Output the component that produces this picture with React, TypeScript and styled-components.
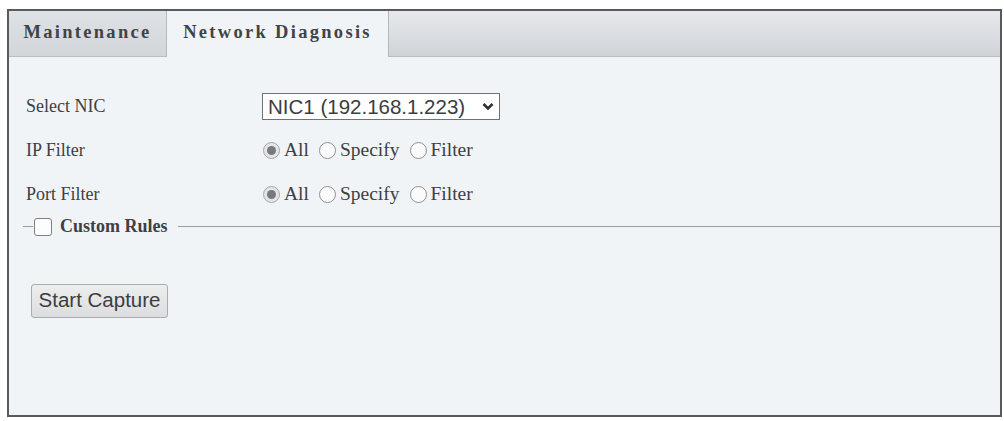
import React from 'react';
import styled, { createGlobalStyle } from 'styled-components';

const GlobalStyle = createGlobalStyle`
  html, body {
    margin: 0;
    padding: 0;
    background: #ffffff;
  }
`;

const Panel = styled.div`
  margin: 9px 2px 0 7px;
  height: 408px;
  border: 2px solid #575a5e;
  background: #f1f4f7;
  display: flex;
  flex-direction: column;
  box-sizing: border-box;
`;

const TabBar = styled.div`
  display: flex;
  height: 45px;
  background: linear-gradient(to bottom, #e6e8eb 0%, #d9dce0 60%, #cfd3d7 100%);
  border-bottom: 1px solid #b9bdc2;
`;

const Tab = styled.div<{ $active?: boolean; $width: number }>`
  display: flex;
  align-items: center;
  justify-content: center;
  height: ${p => (p.$active ? '46px' : '45px')};
  padding-bottom: 3px;
  box-sizing: border-box;
  width: ${p => p.$width}px;
  font-family: "Liberation Serif", "Times New Roman", serif;
  font-weight: bold;
  font-size: 18.5px;
  letter-spacing: 2.3px;
  color: #414447;
  background: ${p => (p.$active ? '#f1f4f7' : 'linear-gradient(to bottom, #dfe2e5, #d2d5d9)')};
  border-right: 1px solid #b4b8bd;
`;

const Content = styled.div`
  padding: 27px 0 0 17px;
  display: flex;
  flex-direction: column;
`;

const Row = styled.div`
  display: flex;
  align-items: center;
  height: 44px;
`;

const Label = styled.div`
  width: 236px;
  font-family: "Liberation Serif", "Times New Roman", serif;
  font-size: 18px;
  color: #3e4043;
`;

const SelectBox = styled.div`
  display: flex;
  align-items: center;
  width: 238px;
  height: 27px;
  box-sizing: border-box;
  border: 1px solid #6f7276;
  background: #ffffff;
  padding: 0 5px 0 5px;
`;

const NativeSelect = styled.select`
  appearance: none;
  flex: 1;
  border: none;
  background: transparent;
  outline: none;
  padding: 0;
  font-family: "Liberation Sans", Arial, sans-serif;
  font-size: 20.5px;
  color: #3b3d40;
`;

const RadioGroup = styled.div`
  display: flex;
  align-items: center;
`;

const RadioItem = styled.label`
  display: flex;
  align-items: center;
  gap: 4px;
  margin-right: 9px;
  font-family: "Liberation Serif", "Times New Roman", serif;
  font-size: 19.5px;
  color: #3e4043;
`;

const Radio = styled.input`
  appearance: none;
  margin: 0 0 0 1px;
  width: 17px;
  height: 17px;
  border-radius: 50%;
  border: 1px solid #8d9094;
  background: #fbfbfb;
  box-sizing: border-box;
  display: grid;
  place-content: center;

  &:checked {
    background: #e4e5e7;
    border-color: #a3a6a9;
  }
  &:checked::before {
    content: '';
    width: 9px;
    height: 9px;
    border-radius: 50%;
    background: #76797d;
  }
`;

const RulesSet = styled.fieldset`
  margin: 0 0 0 -3px;
  padding: 0;
  border: none;
  border-top: 1px solid #9a9ea2;
  min-width: 0;
  height: 24px;
`;

const RulesLegend = styled.legend`
  display: flex;
  align-items: center;
  gap: 8px;
  padding: 0 10px 0 1px;
  margin-left: 10px;
  font-family: "Liberation Serif", "Times New Roman", serif;
  font-weight: bold;
  font-size: 18px;
  color: #3e4043;
`;

const CheckBox = styled.input`
  appearance: none;
  margin: 0;
  width: 18px;
  height: 18px;
  border: 1px solid #7d8084;
  border-radius: 3px;
  background: #fdfdfd;
`;

const Button = styled.button`
  margin: 43px 0 0 5px;
  align-self: flex-start;
  width: 137px;
  height: 34px;
  padding: 0 0 2px;
  border: 1px solid #a9acb0;
  border-radius: 3px;
  background: linear-gradient(to bottom, #eceded, #dcdddf);
  font-family: "Liberation Sans", Arial, sans-serif;
  font-size: 20.5px;
  color: #3b3d40;
`;

const Chevron = () => (
  <svg width="12" height="9" viewBox="0 0 12 9">
    <path d="M1.5 2 L6 6.5 L10.5 2" fill="none" stroke="#2e3033" strokeWidth="2.6" />
  </svg>
);

const RadioRow = ({ name }: { name: string }) => (
  <RadioGroup>
    {['All', 'Specify', 'Filter'].map((opt, i) => (
      <RadioItem key={opt}>
        <Radio type="radio" name={name} defaultChecked={i === 0} />
        {opt}
      </RadioItem>
    ))}
  </RadioGroup>
);

const App = () => (
  <>
    <GlobalStyle />
    <Panel>
      <TabBar>
        <Tab $width={158}>Maintenance</Tab>
        <Tab $width={222} $active>Network Diagnosis</Tab>
      </TabBar>
      <Content>
        <Row>
          <Label>Select NIC</Label>
          <SelectBox>
            <NativeSelect defaultValue="nic1">
              <option value="nic1">NIC1 (192.168.1.223)</option>
            </NativeSelect>
            <Chevron />
          </SelectBox>
        </Row>
        <Row>
          <Label>IP Filter</Label>
          <RadioRow name="ip" />
        </Row>
        <Row>
          <Label>Port Filter</Label>
          <RadioRow name="port" />
        </Row>
        <RulesSet>
          <RulesLegend>
            <CheckBox type="checkbox" />
            Custom Rules
          </RulesLegend>
        </RulesSet>
        <Button>Start Capture</Button>
      </Content>
    </Panel>
  </>
);

export default App;
